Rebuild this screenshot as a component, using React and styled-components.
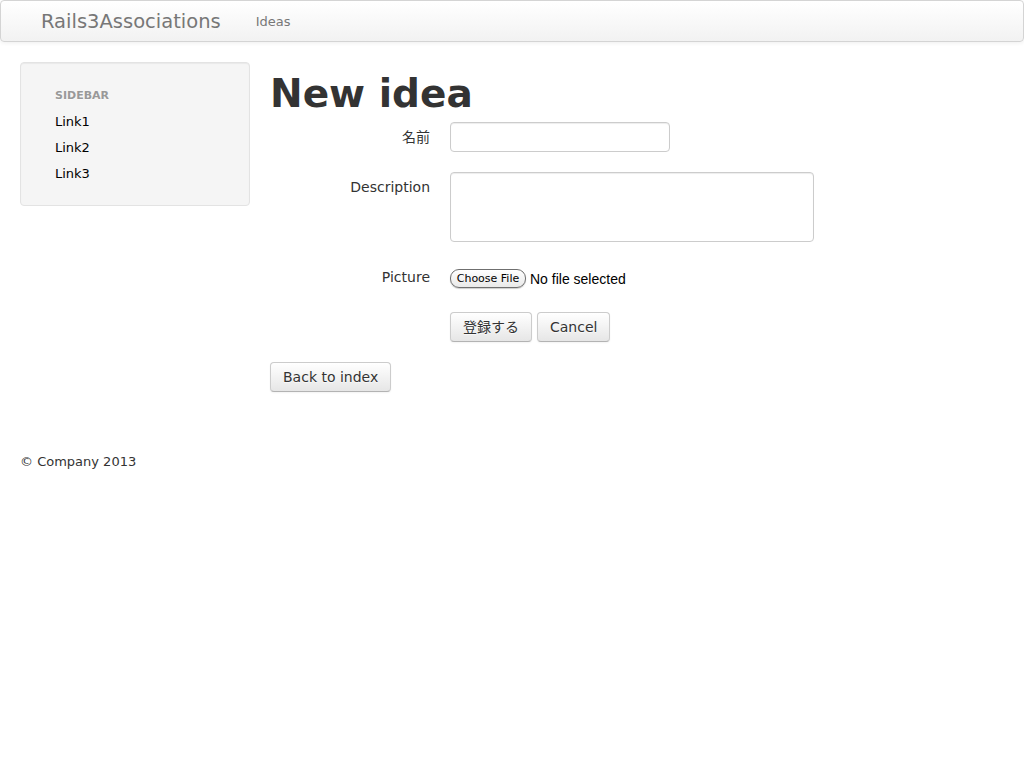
import React from 'react'
import { styled, createGlobalStyle } from 'styled-components'

const GlobalStyle = createGlobalStyle`
  html, body {
    margin: 0;
    padding: 0;
    background: #fff;
  }
  body {
    font-family: "DejaVu Sans", "Noto Sans CJK JP", sans-serif;
    font-size: 14px;
    line-height: 20px;
    color: #333;
  }
`

const Navbar = styled.div`
  height: 39px;
  border: 1px solid #d4d4d4;
  border-radius: 4px;
  background-image: linear-gradient(to bottom, #ffffff, #f2f2f2);
  box-shadow: 0 1px 4px rgba(0, 0, 0, 0.065);
  display: flex;
  align-items: center;
  padding: 1px 20px 0;
  box-sizing: content-box;
`

const Brand = styled.a`
  display: block;
  padding: 10px 20px;
  font-size: 19.5px;
  line-height: 20px;
  color: #777;
  text-decoration: none;
`

const NavLink = styled.a`
  display: block;
  padding: 10px 15px;
  font-size: 13px;
  color: #777;
  text-decoration: none;
`

const Container = styled.div`
  padding: 20px 20px 0;
`

const Row = styled.div`
  display: grid;
  grid-template-columns: 230px 1fr;
  gap: 20px;
  align-items: start;
`

const Well = styled.div`
  background: #f5f5f5;
  border: 1px solid #e3e3e3;
  border-radius: 4px;
  box-shadow: inset 0 1px 1px rgba(0, 0, 0, 0.05);
  padding: 20px 19px 18px;
`

const NavList = styled.ul`
  list-style: none;
  margin: 0;
  padding: 0 15px;
`

const NavHeader = styled.li`
  padding: 3px 0;
  font-size: 11px;
  font-weight: bold;
  line-height: 20px;
  color: #999;
  text-transform: uppercase;
  text-shadow: 0 1px 0 rgba(255, 255, 255, 0.5);
`

const NavItem = styled.li`
  a {
    display: block;
    padding: 3px 0;
    font-size: 13px;
    line-height: 20px;
    color: #000;
    text-decoration: none;
  }
`

const Main = styled.div``

const Title = styled.h1`
  margin: 12px 0 8px;
  font-size: 39px;
  line-height: 40px;
  font-weight: bold;
  color: #333;
`

const Form = styled.form`
  margin: 0 0 20px;
`

const ControlGroup = styled.div`
  display: flex;
  margin-bottom: 20px;
`

const Label = styled.label`
  width: 160px;
  flex: none;
  padding-top: 5px;
  text-align: right;
  line-height: 20px;
  color: #333;
`

const Controls = styled.div`
  margin-left: 20px;
  display: flex;
  align-items: center;
  gap: 5px;
  min-height: 30px;
`

const TextInput = styled.input`
  box-sizing: border-box;
  width: ${(p) => p.$width}px;
  height: 30px;
  padding: 4px 6px;
  border: 1px solid #ccc;
  border-radius: 4px;
  box-shadow: inset 0 1px 1px rgba(0, 0, 0, 0.075);
  font: inherit;
  color: #555;
  outline: none;
`

const TextArea = styled.textarea`
  box-sizing: border-box;
  display: block;
  width: 364px;
  height: 70px;
  padding: 4px 6px;
  border: 1px solid #ccc;
  border-radius: 4px;
  box-shadow: inset 0 1px 1px rgba(0, 0, 0, 0.075);
  font: inherit;
  color: #555;
  resize: none;
  outline: none;
`

const FileField = styled.span`
  display: inline-flex;
  align-items: center;
  gap: 4px;
  padding-top: 3px;
`

const FileButton = styled.span`
  display: inline-block;
  box-sizing: border-box;
  width: 76px;
  height: 19px;
  border: 1px solid #6f6f6f;
  border-radius: 9px;
  background-image: linear-gradient(to bottom, #ffffff, #e9e9e9);
  box-shadow: 0 1px 1px rgba(0, 0, 0, 0.2);
  font-size: 11px;
  line-height: 17px;
  text-align: center;
  color: #000;
`

const FileStatus = styled.span`
  font-family: "Liberation Sans", Arial, sans-serif;
  font-size: 14px;
  color: #000;
`

const Button = styled.button`
  display: inline-block;
  box-sizing: border-box;
  height: 30px;
  padding: 4px 12px;
  font: inherit;
  font-size: 14px;
  line-height: 20px;
  color: #333;
  text-shadow: 0 1px 1px rgba(255, 255, 255, 0.75);
  background-image: linear-gradient(to bottom, #ffffff, #e6e6e6);
  border: 1px solid #cccccc;
  border-bottom-color: #b3b3b3;
  border-radius: 4px;
  box-shadow: inset 0 1px 0 rgba(255, 255, 255, 0.2), 0 1px 2px rgba(0, 0, 0, 0.05);
  cursor: pointer;
`

const Footer = styled.footer`
  margin-top: 60px;
  font-size: 13px;
  line-height: 20px;
  color: #333;
`

export default function App() {
  return (
    <>
      <GlobalStyle />
      <Navbar>
        <Brand href="#">Rails3Associations</Brand>
        <NavLink href="#">Ideas</NavLink>
      </Navbar>
      <Container>
        <Row>
          <Well>
            <NavList>
              <NavHeader>Sidebar</NavHeader>
              <NavItem><a href="#">Link1</a></NavItem>
              <NavItem><a href="#">Link2</a></NavItem>
              <NavItem><a href="#">Link3</a></NavItem>
            </NavList>
          </Well>
          <Main>
            <Title>New idea</Title>
            <Form onSubmit={(e) => e.preventDefault()}>
              <ControlGroup>
                <Label>名前</Label>
                <Controls>
                  <TextInput type="text" $width={220} />
                </Controls>
              </ControlGroup>
              <ControlGroup>
                <Label>Description</Label>
                <Controls>
                  <TextArea />
                </Controls>
              </ControlGroup>
              <ControlGroup>
                <Label>Picture</Label>
                <Controls>
                  <FileField>
                    <FileButton>Choose File</FileButton>
                    <FileStatus>No file selected</FileStatus>
                  </FileField>
                </Controls>
              </ControlGroup>
              <ControlGroup>
                <Label />
                <Controls>
                  <Button type="submit">登録する</Button>
                  <Button type="button">Cancel</Button>
                </Controls>
              </ControlGroup>
            </Form>
            <Button type="button">Back to index</Button>
          </Main>
        </Row>
        <Footer>© Company 2013</Footer>
      </Container>
    </>
  )
}
